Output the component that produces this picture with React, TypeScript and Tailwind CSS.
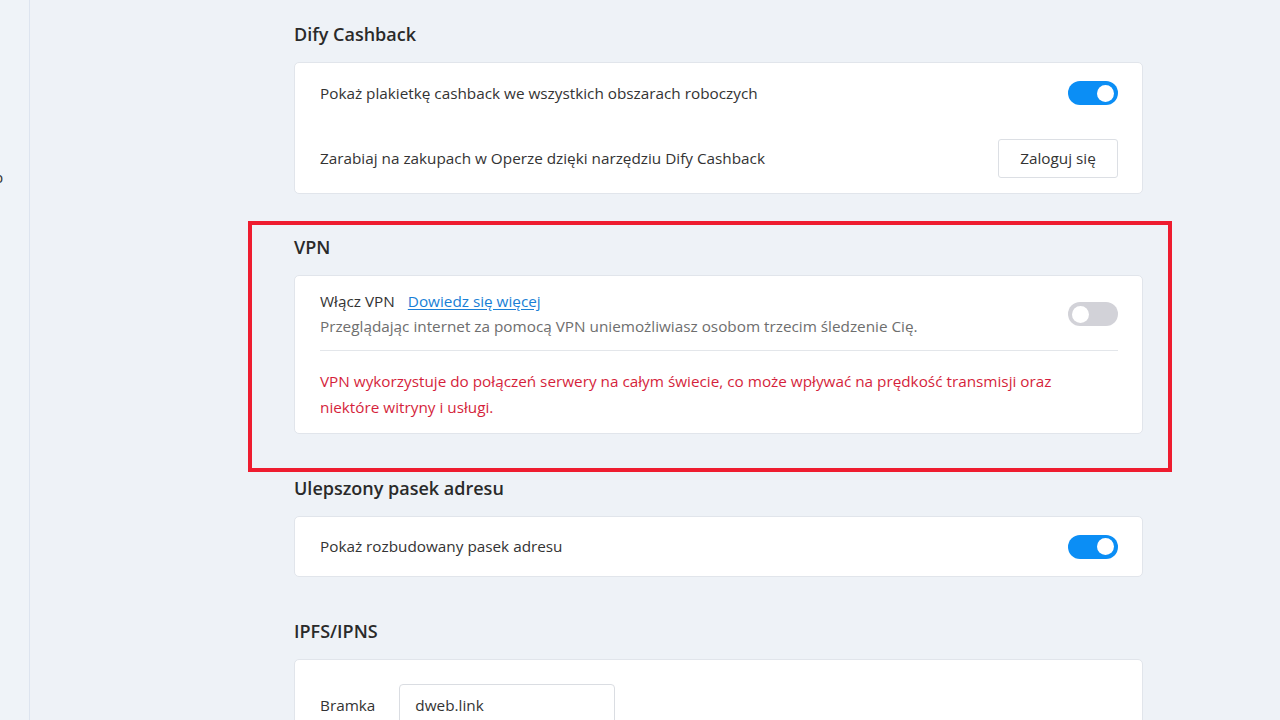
import React from 'react';

function Toggle({ on }: { on: boolean }) {
  return (
    <div
      className={
        on
          ? 'w-[50px] h-[24px] rounded-full bg-[#0b8ef5] flex items-center justify-end px-[4px] shrink-0'
          : 'w-[50px] h-[24px] rounded-full bg-[#d2d2d8] flex items-center justify-start px-[4px] shrink-0'
      }
    >
      <div className="w-[17px] h-[17px] rounded-full bg-white" />
    </div>
  );
}

function SectionTitle({ children }: { children: React.ReactNode }) {
  return (
    <h2 className="h-[28px] flex items-center text-[18px] font-semibold text-[#2a2a2a] mb-[14px]">
      {children}
    </h2>
  );
}

export default function App() {
  return (
    <div
      className="min-h-screen h-[720px] overflow-hidden bg-[#eef2f7] flex"
      style={{ fontFamily: '"Open Sans", "Noto Sans", sans-serif' }}
    >
      {/* Sidebar (cut off) */}
      <aside className="w-[30px] shrink-0 border-r border-[#dde4ef] bg-[#eff3f8] overflow-hidden">
        <div className="mt-[166px] -ml-[6px] text-[15px] text-[#333]">p</div>
      </aside>

      <main className="flex-1 pl-[264px] pt-[20px]">
        <div className="w-[849px] flex flex-col text-[15.3px] text-[#333]">
          {/* Dify Cashback */}
          <section>
            <SectionTitle>Dify Cashback</SectionTitle>
            <div className="bg-white border border-[#e1e5eb] rounded-[5px] pl-[25px] pr-[24px]">
              <div className="h-[60px] flex items-center justify-between">
                <span>Pokaż plakietkę cashback we wszystkich obszarach roboczych</span>
                <Toggle on />
              </div>
              <div className="h-[70px] flex items-center justify-between">
                <span>Zarabiaj na zakupach w Operze dzięki narzędziu Dify Cashback</span>
                <button className="w-[120px] h-[39px] border border-[#dcdfe4] rounded-[3px] bg-white text-[#333] text-[15.3px]">
                  Zaloguj się
                </button>
              </div>
            </div>
          </section>

          {/* VPN */}
          <section className="relative mt-[39px]">
            <div className="absolute -top-[12px] -left-[46px] -right-[29px] -bottom-[38px] border-4 border-[#ee1c2f] pointer-events-none" />
            <SectionTitle>VPN</SectionTitle>
            <div className="bg-white border border-[#e1e5eb] rounded-[5px] pl-[25px] pr-[24px] pt-[13px] pb-[13px]">
              <div className="flex items-center justify-between">
                <div className="flex flex-col leading-[25px]">
                  <div className="flex items-center gap-[13px]">
                    <span>Włącz VPN</span>
                    <a className="text-[#1a7fd6] underline underline-offset-2">Dowiedz się więcej</a>
                  </div>
                  <span className="text-[#6e6e6e]">
                    Przeglądając internet za pomocą VPN uniemożliwiasz osobom trzecim śledzenie Cię.
                  </span>
                </div>
                <Toggle on={false} />
              </div>
              <div className="border-t border-[#e3e6ea] mt-[11px] mb-[17px]" />
              <p className="text-[#d51f3c] leading-[26px]">
                VPN wykorzystuje do połączeń serwery na całym świecie, co może wpływać na prędkość transmisji oraz
                <br />
                niektóre witryny i usługi.
              </p>
            </div>
          </section>

          {/* Ulepszony pasek adresu */}
          <section className="mt-[40px]">
            <SectionTitle>Ulepszony pasek adresu</SectionTitle>
            <div className="bg-white border border-[#e1e5eb] rounded-[5px] pl-[25px] pr-[24px]">
              <div className="h-[59px] flex items-center justify-between">
                <span>Pokaż rozbudowany pasek adresu</span>
                <Toggle on />
              </div>
            </div>
          </section>

          {/* IPFS/IPNS */}
          <section className="mt-[40px]">
            <SectionTitle>IPFS/IPNS</SectionTitle>
            <div className="bg-white border border-[#e1e5eb] rounded-[5px] pl-[25px] pr-[24px] pt-[24px] pb-[20px]">
              <div className="flex items-center gap-[24px]">
                <span>Bramka</span>
                <div className="w-[216px] h-[42px] border border-[#dadde2] rounded-[4px] flex items-center px-[15px]">
                  dweb.link
                </div>
              </div>
            </div>
          </section>
        </div>
      </main>
    </div>
  );
}
